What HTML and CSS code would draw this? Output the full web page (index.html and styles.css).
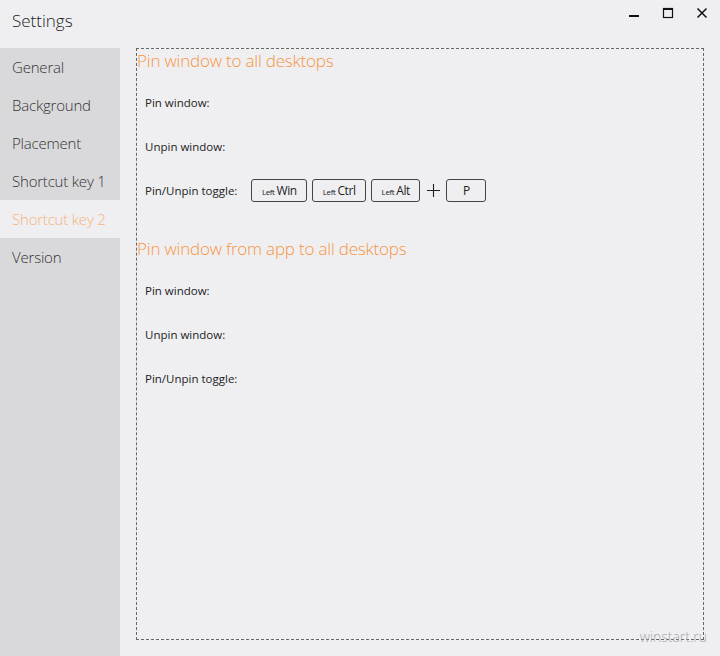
FILE: index.html
```html
<!DOCTYPE html>
<html lang="en">
<head>
    <meta charset="UTF-8">
    <title>Settings</title>
    <link rel="stylesheet" href="styles.css">
</head>
<body>
    <!-- Title bar -->
    <div class="titlebar">
        <div class="title">Settings</div>
        <div class="controls">
            <svg class="ctl" width="12" height="12" viewBox="0 0 12 12"><rect x="1" y="8" width="10" height="2" fill="#111"/></svg>
            <svg class="ctl" width="12" height="12" viewBox="0 0 12 12"><rect x="1.5" y="1.5" width="9" height="9" fill="none" stroke="#111" stroke-width="1.2"/><rect x="1" y="1" width="10" height="2" fill="#111"/></svg>
            <svg class="ctl" width="12" height="12" viewBox="0 0 12 12"><path d="M1.5 1.5 L10.5 10.5 M10.5 1.5 L1.5 10.5" stroke="#111" stroke-width="1.5"/></svg>
        </div>
    </div>

    <div class="main">
        <!-- Side menu -->
        <ul class="menu">
            <li>General</li>
            <li>Background</li>
            <li>Placement</li>
            <li>Shortcut key 1</li>
            <li class="active">Shortcut key 2</li>
            <li>Version</li>
        </ul>

        <!-- Content -->
        <div class="panel">
            <h2>Pin window to all desktops</h2>
            <div class="row">Pin window:</div>
            <div class="row">Unpin window:</div>
            <div class="row">
                <span>Pin/Unpin toggle:</span>
                <span class="keys">
                    <span class="key"><small>Left</small>Win</span>
                    <span class="key"><small>Left</small>Ctrl</span>
                    <span class="key"><small>Left</small>Alt</span>
                    <svg class="plus" width="13" height="13" viewBox="0 0 13 13"><path d="M6.5 0 V13 M0 6.5 H13" stroke="#222" stroke-width="1.1"/></svg>
                    <span class="key wide">P</span>
                </span>
            </div>

            <h2 class="second">Pin window from app to all desktops</h2>
            <div class="row">Pin window:</div>
            <div class="row">Unpin window:</div>
            <div class="row">Pin/Unpin toggle:</div>
        </div>
    </div>

    <div class="watermark">winstart.ru</div>
</body>
</html>
```

FILE: styles.css
```css
body {
    margin: 0;
    width: 720px;
    height: 656px;
    background-color: #efeff2;
    font-family: 'Open Sans', 'Noto Sans', sans-serif;
    color: #222;
    overflow: hidden;
    position: relative;
}

/* Title bar */
.titlebar {
    height: 48px;
    display: flex;
    justify-content: space-between;
}

.titlebar .title {
    font-size: 17px;
    font-weight: 300;
    padding: 9px 0 0 12px;
    color: #222;
}

.controls {
    display: flex;
    gap: 22px;
    padding: 7px 12px 0 0;
}

.ctl {
    display: block;
}

/* Layout */
.main {
    display: flex;
    height: 608px;
}

.menu {
    list-style: none;
    margin: 0;
    padding: 0;
    width: 120px;
    background-color: #d9d9dc;
}

.menu li {
    height: 38px;
    line-height: 38px;
    padding-left: 12px;
    font-size: 15px;
    font-weight: 300;
    color: #333;
    letter-spacing: -0.2px;
}

.menu li.active {
    background-color: #efeff2;
    color: #f6b47a;
}

.panel {
    margin: 0 16px 16px 16px;
    border: 1px dashed #666;
    flex: 1;
    box-sizing: border-box;
}

.panel h2 {
    margin: 0;
    font-size: 17px;
    font-weight: 300;
    color: #f7953f;
    letter-spacing: -0.2px;
    height: 26px;
    line-height: 24px;
}

.panel h2.second {
    margin-top: 25px;
}

.row {
    display: flex;
    align-items: center;
    height: 44px;
    padding-left: 8px;
    font-size: 11.5px;
    color: #222;
}

.panel h2 + .row {
    margin-top: 5px;
}

.keys {
    display: flex;
    align-items: center;
    margin-left: 14px;
    gap: 5px;
}

.key {
    border: 1px solid #444;
    border-radius: 3px;
    height: 21px;
    line-height: 21px;
    padding: 0 9.5px;
    font-size: 12px;
    color: #222;
    letter-spacing: -0.4px;
}

.key small {
    font-size: 8px;
    margin-right: 2px;
}

.key.wide {
    width: 19px;
    text-align: center;
}

.plus {
    display: block;
    margin: 0 1.5px;
}

.watermark {
    position: absolute;
    right: 13px;
    bottom: 10px;
    font-size: 14px;
    font-weight: 300;
    color: #a9a9ad;
}
```
